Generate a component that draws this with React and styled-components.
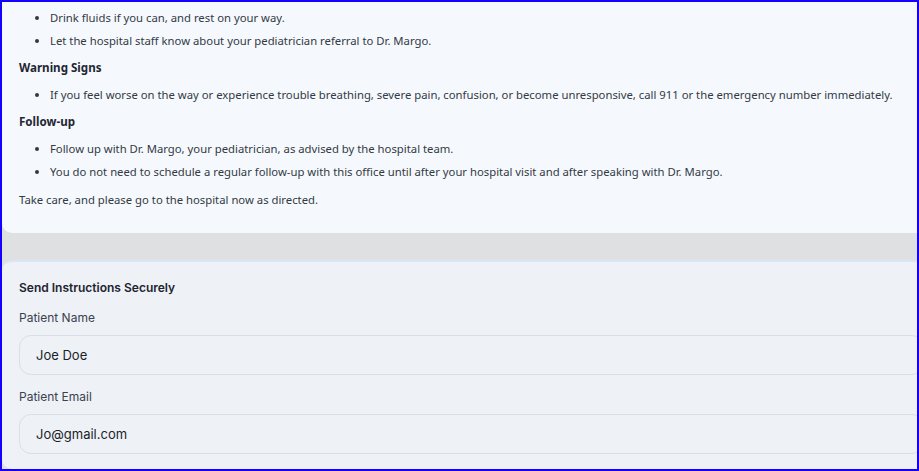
import React from "react";
import styled, { createGlobalStyle } from "styled-components";

const Global = createGlobalStyle`
  html, body { margin: 0; padding: 0; background: #dfe0e1; }
  * { box-sizing: border-box; }
`;

const Frame = styled.div`
  width: 919px;
  height: 471px;
  border: 2px solid #1500ff;
  overflow: hidden;
  background: #dfe0e1;
  display: flex;
  flex-direction: column;
  gap: 27px;
`;

const InstructionsCard = styled.section`
  width: calc(100% + 24px);
  background: #f5f9fd;
  border-radius: 0 0 10px 10px;
  padding: 3.5px 17px 22.5px;
  font-family: "Noto Sans", "Open Sans", sans-serif;
  font-size: 11.3px;
  color: #333a44;
`;

const List = styled.ul`
  margin: 0;
  padding: 0 0 0 31px;
  list-style: disc;
`;

const Item = styled.li`
  line-height: 23px;
  white-space: nowrap;
  &::marker { font-size: 11px; }
`;

const Heading = styled.h4`
  margin: 4px 0;
  line-height: 23px;
  font-size: 11.6px;
  font-weight: 700;
  color: #1f2733;
`;

const Closing = styled.p`
  margin: 5px 0 0;
  line-height: 23px;
`;

const FormCard = styled.section`
  width: calc(100% + 24px);
  flex: 1;
  background: #eef1f6;
  border-top: 2px solid #dbe5fa;
  border-radius: 10px;
  padding: 16px 17px 13px;
  font-family: Inter, "Noto Sans", sans-serif;
  display: flex;
  flex-direction: column;
`;

const FormTitle = styled.h3`
  margin: 0;
  font-size: 12px;
  line-height: 20px;
  font-weight: 600;
  color: #1c2430;
`;

const Label = styled.label`
  margin-top: ${(p) => p.$gap}px;
  font-size: 12px;
  line-height: 20px;
  color: #3a4250;
`;

const Input = styled.input`
  margin-top: 7px;
  height: 40px;
  width: 100%;
  flex-shrink: 0;
  border: 1px solid #d9dee7;
  border-radius: 12px;
  background: #eef1f6;
  padding: 0 16px;
  font-family: Inter, "Noto Sans", sans-serif;
  font-size: 13px;
  color: #1a1f28;
  outline: none;
`;

export default function App() {
  return (
    <>
      <Global />
      <Frame>
        <InstructionsCard>
          <List>
            <Item>Drink fluids if you can, and rest on your way.</Item>
            <Item>Let the hospital staff know about your pediatrician referral to Dr. Margo.</Item>
          </List>
          <Heading>Warning Signs</Heading>
          <List>
            <Item>
              If you feel worse on the way or experience trouble breathing, severe pain, confusion, or become
              unresponsive, call 911 or the emergency number immediately.
            </Item>
          </List>
          <Heading>Follow-up</Heading>
          <List>
            <Item>Follow up with Dr. Margo, your pediatrician, as advised by the hospital team.</Item>
            <Item>
              You do not need to schedule a regular follow-up with this office until after your hospital visit and
              after speaking with Dr. Margo.
            </Item>
          </List>
          <Closing>Take care, and please go to the hospital now as directed.</Closing>
        </InstructionsCard>
        <FormCard>
          <FormTitle>Send Instructions Securely</FormTitle>
          <Label $gap={10}>Patient Name</Label>
          <Input defaultValue="Joe Doe" />
          <Label $gap={12}>Patient Email</Label>
          <Input defaultValue="Jo@gmail.com" />
        </FormCard>
      </Frame>
    </>
  );
}
